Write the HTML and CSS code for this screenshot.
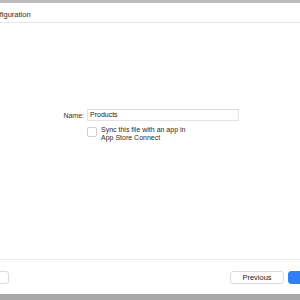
FILE: index.html
```html
<!DOCTYPE html>
<html lang="en">
<head>
    <meta charset="UTF-8">
    <meta name="viewport" content="width=device-width, initial-scale=1.0">
    <title>StoreKit Configuration</title>
    <link rel="stylesheet" href="styles.css">
</head>
<body>
    <div class="window">
        <!-- Верхняя полоса окна -->
        <div class="top-strip"></div>

        <div class="header">
            <span class="title">Configuration</span>
        </div>

        <!-- Форма -->
        <div class="main">
            <div class="row">
                <label class="label" for="name">Name:</label>
                <div class="field" id="name">Products</div>
            </div>
            <div class="check-row">
                <span class="checkbox"></span>
                <span class="check-text">Sync this file with an app in<br>App Store Connect</span>
            </div>
        </div>

        <!-- Кнопки -->
        <div class="footer">
            <button class="btn btn-cancel">Cancel</button>
            <div class="spacer"></div>
            <button class="btn">Previous</button>
            <button class="btn btn-primary">Create</button>
        </div>

        <div class="bottom-strip"></div>
    </div>
</body>
</html>
```

FILE: styles.css
```css
body {
    margin: 0;
    font-family: 'Liberation Sans', Arial, sans-serif;
    color: #262626;
    background: #fff;
    overflow: hidden;
}
.window {
    width: 300px;
    height: 300px;
    display: flex;
    flex-direction: column;
    overflow: hidden;
}
.top-strip {
    height: 3px;
    background: #bdbdbd;
    flex-shrink: 0;
}
.header {
    height: 19px;
    border-bottom: 1px solid #e6e6e6;
    display: flex;
    align-items: center;
    flex-shrink: 0;
}
.title {
    font-size: 7.5px;
    margin-left: -14px;
    padding-top: 3px;
    color: #2a2a2a;
}
.main {
    flex: 1;
    padding-top: 86px;
}
.row {
    display: flex;
    align-items: center;
    gap: 3px;
}
.label {
    width: 84px;
    text-align: right;
    font-size: 7px;
    color: #333;
}
.field {
    width: 146px;
    height: 10px;
    border: 1px solid #e4e4e4;
    border-top-color: #d9d9d9;
    padding: 0 2px;
    font-size: 7px;
    line-height: 10px;
    color: #222;
}
.check-row {
    display: flex;
    align-items: flex-start;
    margin-left: 87px;
    margin-top: 5px;
    gap: 4px;
}
.checkbox {
    width: 8px;
    height: 8px;
    border: 1px solid #cfcfcf;
    border-radius: 2px;
    margin-top: 1px;
    flex-shrink: 0;
}
.check-text {
    font-size: 7px;
    line-height: 8px;
    color: #2a2a2a;
}
.footer {
    height: 35px;
    border-top: 1px solid #ededed;
    display: flex;
    align-items: flex-start;
    padding-top: 11px;
    box-sizing: border-box;
    gap: 4px;
    flex-shrink: 0;
}
.spacer {
    flex: 1;
}
.btn {
    font-family: 'Liberation Sans', Arial, sans-serif;
    font-size: 7.5px;
    color: #222;
    background: #fff;
    border: 1px solid #dcdcdc;
    border-radius: 3px;
    height: 13px;
    width: 54px;
    padding: 0;
    flex-shrink: 0;
}
.btn-cancel {
    margin-left: -45px;
}
.btn-primary {
    background: #2f7ff7;
    border-color: #2f7ff7;
    color: #fff;
    margin-right: -42px;
}
.bottom-strip {
    height: 6px;
    background: #a8a8a8;
    flex-shrink: 0;
}
```
